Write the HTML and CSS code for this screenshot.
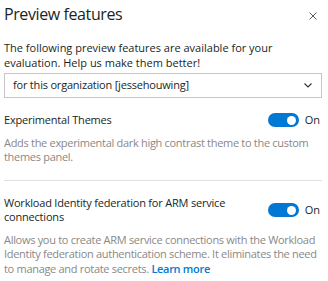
FILE: index.html
```html
<!DOCTYPE html>
<html lang="en">
<head>
  <meta charset="UTF-8">
  <title>Preview features</title>
  <link rel="stylesheet" href="styles.css">
</head>
<body>
  <div class="panel">
    <!-- Header -->
    <div class="header">
      <h1 class="title">Preview features</h1>
      <button class="close" aria-label="Close">
        <svg width="8" height="8" viewBox="0 0 8 8"><path d="M0.5 0.5L7.5 7.5M7.5 0.5L0.5 7.5" stroke="#605e5c" stroke-width="1"/></svg>
      </button>
    </div>
    <p class="intro">The following preview features are available for your evaluation. Help us make them better!</p>
    <div class="dropdown">
      <span>for this organization [jessehouwing]</span>
      <svg width="8" height="5" viewBox="0 0 8 5"><path d="M0.5 0.5L4 4L7.5 0.5" fill="none" stroke="#323130" stroke-width="1.1"/></svg>
    </div>
    <!-- Features -->
    <div class="feature">
      <div class="feature-row">
        <div class="feature-name">Experimental Themes</div>
        <div class="toggle"><span class="switch"></span>On</div>
      </div>
      <div class="feature-desc">Adds the experimental dark high contrast theme to the custom themes panel.</div>
    </div>
    <hr class="divider">
    <div class="feature">
      <div class="feature-row">
        <div class="feature-name">Workload Identity federation for ARM service connections</div>
        <div class="toggle"><span class="switch"></span>On</div>
      </div>
      <div class="feature-desc">Allows you to create ARM service connections with the Workload Identity federation authentication scheme. It eliminates the need to manage and rotate secrets. <a href="#" class="link">Learn more</a></div>
    </div>
  </div>
</body>
</html>
```

FILE: styles.css
```css
html {
  font: 11px/14.5px "Open Sans", sans-serif;
  letter-spacing: -0.2px;
  color: #201f1e;
}
body {
  margin: 0;
  background: #fff;
  overflow: hidden;
}
.panel {
  padding: 0 6px 0 4px;
}
.header {
  display: flex;
  justify-content: space-between;
  align-items: center;
  height: 28px;
}
.title {
  margin: 0;
  font-size: 16px;
  font-weight: 400;
  letter-spacing: -0.4px;
}
.close {
  border: 0;
  background: none;
  padding: 0;
  margin: 4px 5px 0 0;
  display: flex;
}
.intro {
  margin: 12px 0 3px;
  line-height: 15px;
  letter-spacing: 0;
}
.dropdown {
  display: flex;
  justify-content: space-between;
  align-items: center;
  height: 23px;
  border: 1px solid #c8c6c4;
  padding: 0 9px 0 8px;
}
.feature {
  padding-top: 15px;
}
.feature-row {
  display: flex;
  justify-content: space-between;
  align-items: center;
  gap: 20px;
}
.feature-name {
  flex: 1;
}
.toggle {
  display: flex;
  align-items: center;
  gap: 6px;
  padding-right: 2px;
  letter-spacing: 0;
}
.switch {
  width: 31px;
  height: 14px;
  border-radius: 7px;
  background: #0078d4;
  position: relative;
}
.switch::after {
  content: "";
  position: absolute;
  right: 3px;
  top: 2.5px;
  width: 9px;
  height: 9px;
  border-radius: 50%;
  background: #fff;
}
.feature-desc {
  color: #8a8886;
  margin-top: 8px;
  letter-spacing: -0.3px;
}
.divider {
  border: 0;
  border-top: 1px solid #e1dfdd;
  margin: 15px 0 0;
}
.link {
  color: #0078d4;
  font-weight: 600;
  text-decoration: none;
}
```
